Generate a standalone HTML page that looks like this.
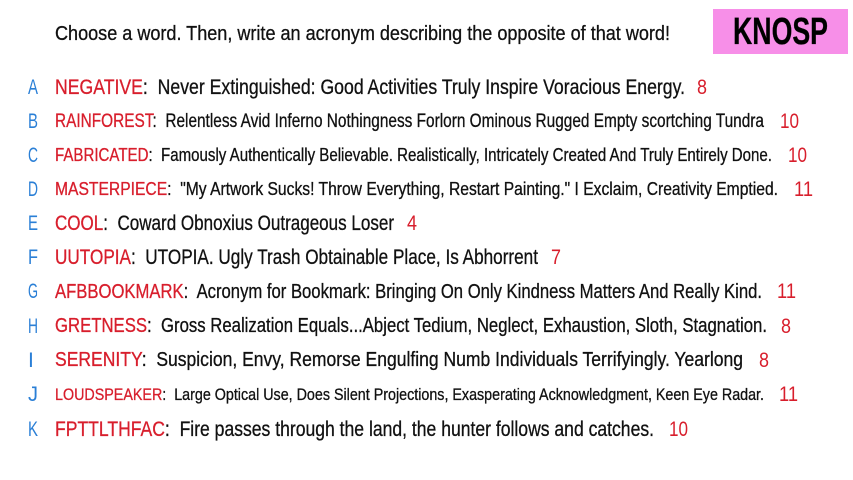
<!DOCTYPE html>
<html><head><meta charset="utf-8"><style>
html,body{margin:0;padding:0;background:#fff;width:853px;height:480px;overflow:hidden;position:relative;font-family:"Liberation Sans",sans-serif}
.t{position:absolute;white-space:nowrap;transform-origin:0 50%;color:#111;line-height:1;-webkit-text-stroke:0.3px #111}
.l{position:absolute;left:28px;color:#2a7fd6;line-height:1}
.n{position:absolute;color:#d81e2c;line-height:1}
.r{color:#d81e2c;-webkit-text-stroke:0.3px #d81e2c}
#box{position:absolute;left:713px;top:9px;width:135px;height:45px;background:#f78fe8}
</style></head><body>
<div class="t" id="h" style="left:55px;top:24px;font-size:20px">Choose a word. Then, write an acronym describing the opposite of that word!</div>
<div id="box"></div>
<div class="t" id="k" style="left:733px;top:13px;font-size:38px;color:#000;font-weight:bold">KNOSP</div>

<div class="l" style="top:77px;font-size:21px">A</div>
<div class="t" style="left:55px;top:77px;font-size:21px"><span class="r">NEGATIVE</span>:&nbsp; Never Extinguished: Good Activities Truly Inspire Voracious Energy.</div>
<div class="n" style="left:697px;top:77px;font-size:21px">8</div>

<div class="l" style="top:111px;font-size:21px">B</div>
<div class="t" style="left:55px;top:112px;font-size:19px"><span class="r">RAINFOREST</span>:&nbsp; Relentless Avid Inferno Nothingness Forlorn Ominous Rugged Empty scortching Tundra</div>
<div class="n" style="left:780px;top:111px;font-size:21px">10</div>

<div class="l" style="top:145px;font-size:21px">C</div>
<div class="t" style="left:55px;top:146px;font-size:18px"><span class="r">FABRICATED</span>:&nbsp; Famously Authentically Believable. Realistically, Intricately Created And Truly Entirely Done.</div>
<div class="n" style="left:788px;top:145px;font-size:21px">10</div>

<div class="l" style="top:179px;font-size:21px">D</div>
<div class="t" style="left:55px;top:180px;font-size:18px"><span class="r">MASTERPIECE</span>:&nbsp; "My Artwork Sucks! Throw Everything, Restart Painting." I Exclaim, Creativity Emptied.</div>
<div class="n" style="left:794px;top:179px;font-size:21px">11</div>

<div class="l" style="top:213px;font-size:21px">E</div>
<div class="t" style="left:55px;top:213px;font-size:21px"><span class="r">COOL</span>:&nbsp; Coward Obnoxius Outrageous Loser</div>
<div class="n" style="left:407px;top:213px;font-size:21px">4</div>

<div class="l" style="top:247px;font-size:21px">F</div>
<div class="t" style="left:55px;top:247px;font-size:21px"><span class="r">UUTOPIA</span>:&nbsp; UTOPIA. Ugly Trash Obtainable Place, Is Abhorrent</div>
<div class="n" style="left:551px;top:247px;font-size:21px">7</div>

<div class="l" style="top:281px;font-size:21px">G</div>
<div class="t" style="left:55px;top:282px;font-size:20px"><span class="r">AFBBOOKMARK</span>:&nbsp; Acronym for Bookmark: Bringing On Only Kindness Matters And Really Kind.</div>
<div class="n" style="left:777px;top:281px;font-size:21px">11</div>

<div class="l" style="top:316px;font-size:21px">H</div>
<div class="t" style="left:55px;top:316px;font-size:20px"><span class="r">GRETNESS</span>:&nbsp; Gross Realization Equals...Abject Tedium, Neglect, Exhaustion, Sloth, Stagnation.</div>
<div class="n" style="left:781px;top:316px;font-size:21px">8</div>

<div class="l" style="top:350px;font-size:21px">I</div>
<div class="t" style="left:55px;top:350px;font-size:20px"><span class="r">SERENITY</span>:&nbsp; Suspicion, Envy, Remorse Engulfing Numb Individuals Terrifyingly. Yearlong</div>
<div class="n" style="left:759px;top:350px;font-size:21px">8</div>

<div class="l" style="top:384px;font-size:21px">J</div>
<div class="t" style="left:55px;top:386px;font-size:17px"><span class="r">LOUDSPEAKER</span>:&nbsp; Large Optical Use, Does Silent Projections, Exasperating Acknowledgment, Keen Eye Radar.</div>
<div class="n" style="left:779px;top:384px;font-size:21px">11</div>

<div class="l" style="top:419px;font-size:21px">K</div>
<div class="t" style="left:55px;top:419px;font-size:21px"><span class="r">FPTTLTHFAC</span>:&nbsp; Fire passes through the land, the hunter follows and catches.</div>
<div class="n" style="left:669px;top:419px;font-size:21px">10</div>

<script>
var targets=[670-55,828-733,685-55,764-55,772-55,778-55,394-55,538-55,762-55,767-55,743-55,764-55,654-55];
var els=document.querySelectorAll('.t');
for(var i=0;i<els.length;i++){var w=els[i].getBoundingClientRect().width;if(w>0)els[i].style.transform='scaleX('+(targets[i]/w)+')';}
var nums=document.querySelectorAll('.n');
for(var j=0;j<nums.length;j++){var ww=nums[j].getBoundingClientRect().width;var tw=nums[j].textContent.length>1?19:10;nums[j].style.transformOrigin='0 50%';nums[j].style.transform='scaleX('+(tw/ww)+')';}
var ls=document.querySelectorAll('.l');
for(var m=0;m<ls.length;m++){var lw=ls[m].getBoundingClientRect().width;ls[m].style.transformOrigin='0 50%';ls[m].style.transform='scaleX('+(Math.min(10,lw)/lw)+')';}
</script>
</body></html>
